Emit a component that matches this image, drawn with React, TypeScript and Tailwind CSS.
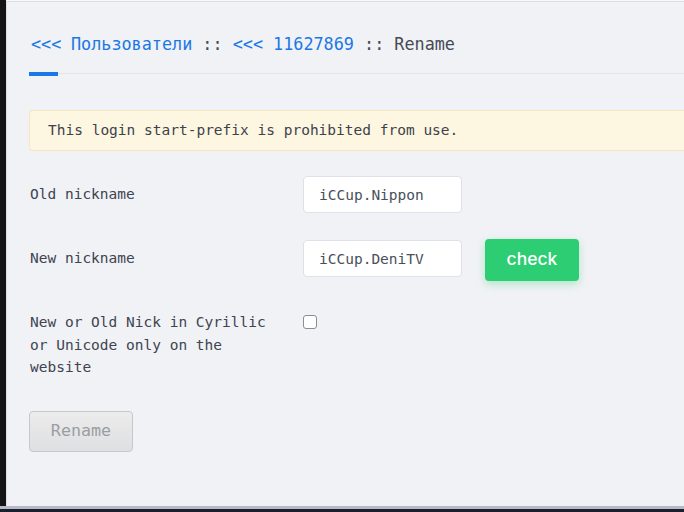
import { useState } from 'react';

const mono = { fontFamily: '"DejaVu Sans Mono", "Liberation Mono", monospace' };

export default function App() {
  const [oldNick] = useState('iCCup.Nippon');
  const [newNick, setNewNick] = useState('iCCup.DeniTV');
  const [cyrillic, setCyrillic] = useState(false);

  return (
    <div className="h-[512px] w-[684px] overflow-hidden bg-[#1b2030] flex flex-col" style={mono}>
      <div className="flex flex-1 min-h-0 bg-[#f7f8fa]">
        {/* dark side strip */}
        <div className="w-[6px] bg-[#141414]" />
        <div className="flex-1 mt-px border-t border-l border-[#dcdee4] bg-[#f1f2f6] pl-[22px] flex flex-col">
          {/* Tabs / breadcrumb */}
          <div className="flex items-end border-b border-[#e3e4ea] pt-[30px] text-[16.8px] leading-[24px] text-[#454a54]">
            <a className="w-[29px] shrink-0 whitespace-nowrap pl-[2px] text-[#1a78e6] pb-[16px] -mb-[3px] border-b-4 border-[#1a78e6]">&lt;&lt;&lt;</a>
            <span className="pb-[17px] pl-[13px]" />
            <a className="text-[#1a78e6] pb-[17px]">Пользователи</a>
            <span className="pb-[17px] whitespace-pre"> :: </span>
            <a className="text-[#1a78e6] pb-[17px] whitespace-pre">&lt;&lt;&lt; 11627869</a>
            <span className="pb-[17px] whitespace-pre"> :: Rename</span>
          </div>

          {/* Warning */}
          <div className="mt-[36px] h-[41px] flex items-center rounded-l-[4px] border border-r-0 border-[#f6e5c3] bg-[#fdf6e1] pl-[18px] text-[14.5px] text-[#3d424c]">
            This login start-prefix is prohibited from use.
          </div>

          {/* Old nickname */}
          <div className="mt-[25px] flex items-center text-[14.5px] text-[#3f4450]">
            <label className="w-[274px] shrink-0 pl-px">Old nickname</label>
            <input
              readOnly
              value={oldNick}
              className="h-[37px] w-[159px] rounded-[4px] border border-[#dfe1ea] bg-white pl-[15px] text-[14.5px] text-[#4a4f5a] outline-none"
              style={mono}
            />
          </div>

          {/* New nickname */}
          <div className="mt-[26px] flex items-start text-[14.5px] text-[#3f4450]">
            <label className="mt-px flex h-[37px] w-[274px] shrink-0 items-center pl-px">New nickname</label>
            <input
              value={newNick}
              onChange={e => setNewNick(e.target.value)}
              className="mt-px h-[37px] w-[159px] rounded-[4px] border border-[#dfe1ea] bg-white pl-[15px] text-[14.5px] text-[#4a4f5a] outline-none"
              style={mono}
            />
            <button
              className="ml-[23px] h-[42px] w-[94px] rounded-[4px] bg-[#2dcd73] pb-px text-[17.5px] font-medium text-white shadow-[0_3px_8px_rgba(46,204,113,0.35)]"
              style={{ fontFamily: 'Inter, "Noto Sans", sans-serif' }}
            >
              check
            </button>
          </div>

          {/* Cyrillic checkbox */}
          <div className="mt-[30px] flex items-start text-[14.5px] leading-[22.5px] text-[#3f4450]">
            <label className="w-[274px] shrink-0 pl-px pr-[22px]">
              New or Old Nick in Cyrillic or Unicode only on the website
            </label>
            <input
              type="checkbox"
              checked={cyrillic}
              onChange={e => setCyrillic(e.target.checked)}
              className="mt-[4px] h-[14px] w-[14px] appearance-none rounded-[3px] border border-[#8a8d93] bg-white"
            />
          </div>

          {/* Rename */}
          <div className="mt-[32px]">
            <button
              disabled
              className="h-[41px] w-[104px] rounded-[4px] border border-[#c6c8cc] bg-gradient-to-b from-[#ececec] to-[#dedfe1] text-[16.7px] text-[#9b9ea3]"
              style={mono}
            >
              Rename
            </button>
          </div>
        </div>
      </div>
      <div className="h-[3px] bg-[#b6bac2]" />
      <div className="h-[3px] bg-[#1b2030]" />
    </div>
  );
}
